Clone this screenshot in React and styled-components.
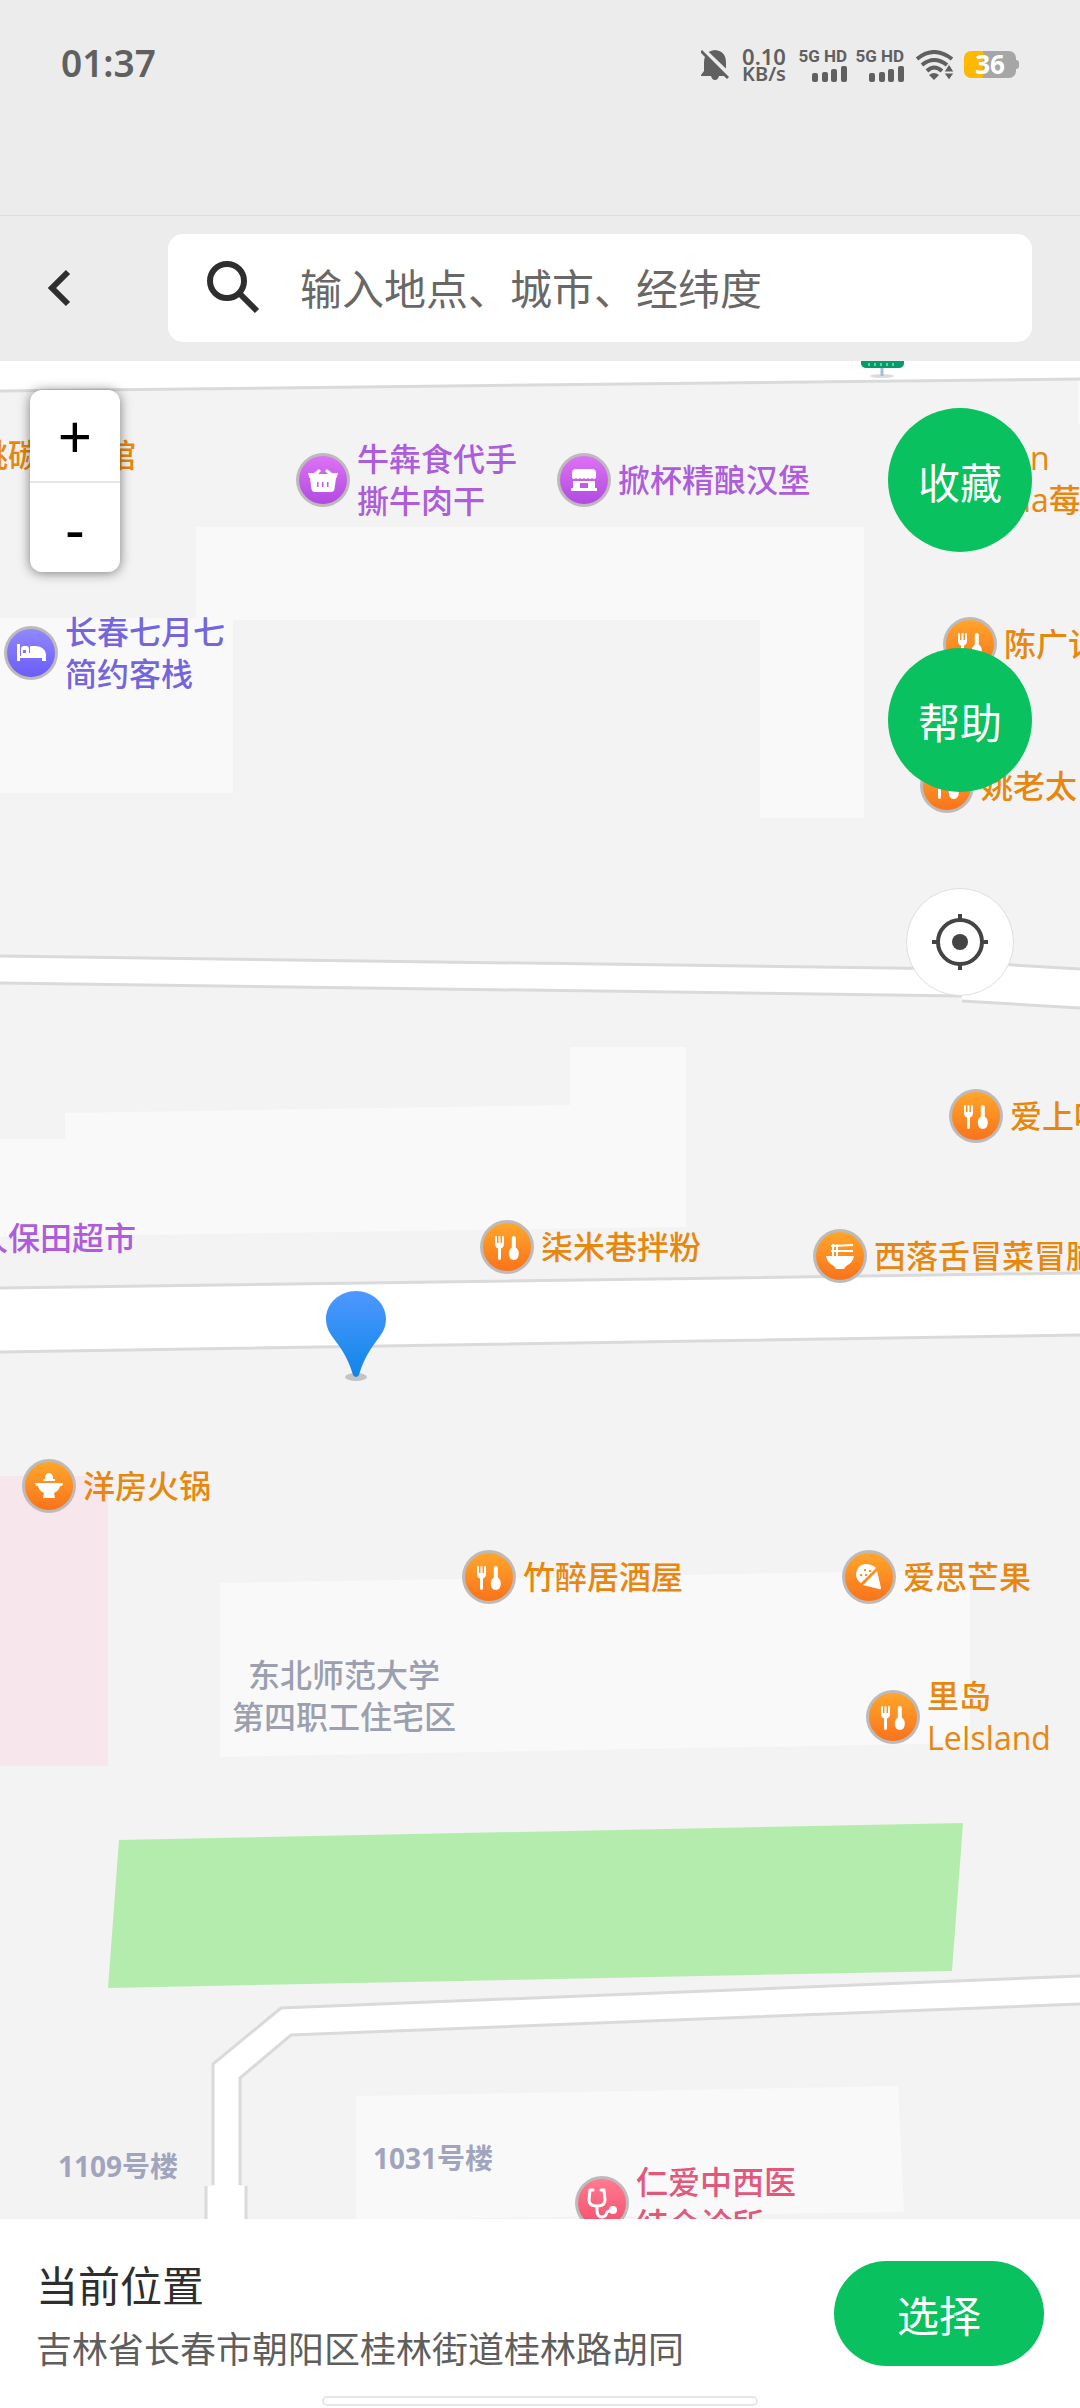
import styled, { createGlobalStyle } from "styled-components";

const GlobalStyle = createGlobalStyle`
  * {
    box-sizing: border-box;
  }
  body {
    margin: 0;
    background-color: #ffffff;
    font-family: "Noto Sans", "Noto Sans CJK SC", sans-serif;
  }
  button, input {
    font-family: inherit;
  }
`;

const Page = styled.div`
  min-height: 100vh;
  display: flex;
  flex-direction: column;
`;

const StatusBar = styled.div`
  height: 215px;
  padding: 39px 61px 0 61px;
  background-color: #ececec;
  color: #606060;
  display: flex;
  justify-content: space-between;
  align-items: flex-start;
`;

const Clock = styled.div`
  font-size: 37px;
  line-height: 48px;
  font-weight: 600;
`;

const StatusIcons = styled.div`
  height: 51px;
  display: flex;
  align-items: center;
`;

const Speed = styled.div`
  width: 46px;
  margin-left: 12px;
  font-size: 22px;
  line-height: 18px;
  font-weight: 600;
  text-align: center;
`;

const SpeedUnit = styled.div`
  font-size: 20px;
`;

const Sim = styled.div`
  width: 47px;
  margin-left: ${(props) => props.$gap}px;
  display: flex;
  flex-direction: column;
  align-items: flex-end;
  gap: 2px;
  font-family: Roboto, sans-serif;
  font-size: 17px;
  line-height: 16px;
  font-weight: 700;
  white-space: nowrap;
`;

const Wifi = styled.svg`
  margin-left: 12px;
`;

const Battery = styled.div`
  width: 52px;
  height: 27px;
  margin-left: 10px;
  border-radius: 7px;
  background: linear-gradient(to right, #fdb900 36%, #a6a6a6 36%);
  color: white;
  font-size: 26px;
  line-height: 27px;
  font-weight: 700;
  text-align: center;
`;

const BatteryTip = styled.div`
  width: 3px;
  height: 9px;
  background-color: #a6a6a6;
  border-radius: 0 3px 3px 0;
`;

const Toolbar = styled.div`
  padding: 18px 48px 19px 0;
  background-color: #ececec;
  border-top: 1px solid #dcdcdc;
  display: flex;
  align-items: center;
`;

const BackButton = styled.button`
  width: 168px;
  height: 108px;
  padding: 0 0 0 44px;
  border: none;
  background: none;
  display: flex;
  align-items: center;
  cursor: pointer;
`;

const SearchBox = styled.label`
  flex: 1;
  height: 108px;
  padding: 0 36px;
  border-radius: 15px;
  background-color: white;
  display: flex;
  align-items: center;
  gap: 36px;
`;

const SearchInput = styled.input`
  flex: 1;
  min-width: 0;
  height: 64px;
  padding: 0;
  border: none;
  outline: none;
  background: none;
  font-size: 42px;
  color: #333333;
  &::placeholder {
    color: #686868;
    opacity: 1;
  }
`;

const Map = styled.main`
  flex: 1;
  min-height: 600px;
  position: relative;
  overflow: hidden;
  background-color: #f3f3f3;
`;

const Tiles = styled.div`
  width: 1080px;
  position: absolute;
  top: 0;
  left: 50%;
  margin-left: -540px;
`;

const Streets = styled.svg`
  display: block;
`;

const Place = styled.div`
  position: absolute;
  left: ${(props) => props.$x}px;
  top: ${(props) => props.$y}px;
  transform: translateY(-50%);
  display: flex;
  align-items: center;
  gap: 7px;
  color: ${(props) => props.$color};
  font-family: "Open Sans", "Noto Sans CJK SC", sans-serif;
  font-size: 32px;
  line-height: 42px;
  font-weight: 500;
  text-align: ${(props) => props.$align || "left"};
  white-space: pre;
`;

const Building = styled(Place)`
  font-size: 28px;
  font-weight: 700;
`;

const Pin = styled.svg`
  position: absolute;
  left: 324px;
  top: 929px;
`;

const ZoomControl = styled.div`
  position: absolute;
  left: 30px;
  top: 29px;
  width: 90px;
  border-radius: 12px;
  background-color: white;
  box-shadow: 0 1px 12px rgba(0, 0, 0, 0.5);
`;

const ZoomButton = styled.button`
  display: block;
  width: 90px;
  height: 91px;
  padding: 0;
  border: none;
  background: none;
  color: black;
  font-size: 60px;
  line-height: 80px;
  cursor: pointer;
  & + & {
    border-top: 2px solid #e6e6e6;
  }
`;

const Actions = styled.div`
  position: absolute;
  right: 48px;
  top: 47px;
  display: flex;
  flex-direction: column;
  align-items: center;
  gap: 96px;
`;

const RoundButton = styled.button`
  width: 144px;
  height: 144px;
  padding: 0;
  border: none;
  border-radius: 50%;
  background-color: #0ac160;
  color: white;
  font-size: 42px;
  cursor: pointer;
`;

const LocateButton = styled.button`
  width: 108px;
  height: 108px;
  padding: 0;
  border: 1px solid #dedede;
  border-radius: 50%;
  background-color: white;
  display: flex;
  align-items: center;
  justify-content: center;
  cursor: pointer;
`;

const Footer = styled.footer`
  background-color: white;
`;

const Current = styled.div`
  height: 177px;
  padding: 12px 36px 0 36px;
  display: flex;
  align-items: center;
  justify-content: space-between;
`;

const CurrentText = styled.div`
  padding-top: 8px;
`;

const Title = styled.h1`
  margin: 0;
  color: #2e2e2e;
  font-size: 42px;
  line-height: 64px;
  font-weight: 400;
`;

const Address = styled.p`
  margin: 0;
  color: #5e5e5e;
  font-size: 36px;
  line-height: 64px;
`;

const SelectButton = styled.button`
  width: 210px;
  height: 105px;
  padding: 0;
  border: none;
  border-radius: 53px;
  background-color: #0ac160;
  color: white;
  font-size: 42px;
  cursor: pointer;
`;

const HomeBar = styled.div`
  width: 436px;
  height: 10px;
  margin: 0 auto 2px;
  border: 2px solid #e6e6e6;
  border-radius: 5px;
`;

const orange = "#e8870e";
const purple = "#ad5cdb";
const violet = "#7465dc";
const grey = "#9b9fae";
const slate = "#a0a4bd";
const red = "#e2587b";

const gradients = {
  food: ["#ffa62b", "#f9731b"],
  shop: ["#dd72f5", "#b14be0"],
  hotel: ["#9088ff", "#6b5cf5"],
  health: ["#ff7a90", "#f4506f"],
};

// glyphs are drawn around the middle of the badge
const glyphs = {
  fork: (
    <>
      <path d="M-12-10q0-1 1-1t1 1v6h1.500v-6q0-1 1-1t1 1v6H-5v-6q0-1 1-1t1 1v7q0 3-3 4.500V11q0 2-1.500 2T-9 11V1.500q-3-1.500-3-4.500z" />
      <path d="M4.800-9q0-2 2-2t2 2v9.500q3 2 3 6 0 6-5 6.500-5-.5-5-6.500 0-4 3-6z" />
    </>
  ),
  basket: (
    <>
      <path d="M-15-7h6l5-4 2 2-3 3H5L2-9l2-2 5 4h6l-1.500 5H-13.500z" />
      <path fillRule="evenodd" d="M-13-2h26l-1.500 11q-.5 3-3.500 3H-8q-3 0-3.500-3zM-6 2v5h1.500V2zM-1 2v5h1.500V2zM4 2v5h1.500V2z" />
    </>
  ),
  store: (
    <>
      <path d="M-12-7q0-4 4-4H8q4 0 4 4v5q-2 2-4 0-2 2-4 0-2 2-4 0-2 2-4 0-2 2-4 0-2 2-4 0z" />
      <path fillRule="evenodd" d="M-11 1h22v7h2v3h-26V8h2zM-4 3v5h8V3z" />
    </>
  ),
  bed: (
    <path fillRule="evenodd" d="M-14-9h3v12h1v-7q0-3 3-3h2q3 0 3 3v4h1v-7h5q9 0 11 8v7H11V5h-22v3h-3zM-8-3v3h3v-3z" />
  ),
  noodles: (
    <>
      <path d="M-8-12h2V0h-2zM-4-12h2V0h-2z" />
      <path d="M-9-11 13-12v2L-9-9zM-9-6H13v2H-9z" />
      <path d="M-14 0h28q-1 7-8 10l-2 3h-8l-2-3Q-13 7-14 0z" />
    </>
  ),
  hotpot: (
    <>
      <path d="M-4-7v-2q1-4 4-4t4 4v2h2v2H-6v-2z" />
      <path d="M-14-3h28l-1 3H11Q10 5 5 7l1 5H-6l1-5q-5-2-6-7h-2z" />
    </>
  ),
  icecream: (
    <>
      <path fillRule="evenodd" d="M-8 6q-5-3-5-9 1-9 9-10 7 0 11 4zM-9-3v2h2v-2zM-5-8v2h2v-2zM-4-3v2h2v-2zM0-7v2h2v-2z" />
      <path d="M8-6l4 17q0 2-2 1L-6 8z" />
    </>
  ),
  doctor: (
    <>
      <path
        d="M-9-13h-3l-1 10q0 6 8 6t8-6l-1-10h-3M-5 3v4q0 7 5 7 4 0 5-5l4-2"
        fill="none"
        stroke="white"
        strokeWidth="3"
        strokeLinecap="round"
        strokeLinejoin="round"
      />
      <circle cx="11" cy="7" r="4" />
    </>
  ),
};

const places = [
  { x: 296, y: 119, color: purple, kind: "shop", icon: "basket", name: "牛犇食代手\n撕牛肉干" },
  { x: 557, y: 119, color: purple, kind: "shop", icon: "store", name: "掀杯精酿汉堡" },
  { x: 4, y: 292, color: violet, kind: "hotel", icon: "bed", name: "长春七月七\n简约客栈" },
  { x: 943, y: 283, color: orange, kind: "food", icon: "fork", name: "陈广记" },
  { x: 920, y: 425, color: orange, kind: "food", icon: "fork", name: "姚老太" },
  { x: 949, y: 755, color: orange, kind: "food", icon: "fork", name: "爱上呷" },
  { x: 480, y: 886, color: orange, kind: "food", icon: "fork", name: "柒米巷拌粉" },
  { x: 813, y: 895, color: orange, kind: "food", icon: "noodles", name: "西落舌冒菜冒脑花" },
  { x: 22, y: 1125, color: orange, kind: "food", icon: "hotpot", name: "洋房火锅" },
  { x: 462, y: 1216, color: orange, kind: "food", icon: "fork", name: "竹醉居酒屋" },
  { x: 842, y: 1216, color: orange, kind: "food", icon: "icecream", name: "爱思芒果" },
  { x: 866, y: 1356, color: orange, kind: "food", icon: "fork", name: "里岛\nLeIsland" },
  { x: 575, y: 1842, color: red, kind: "health", icon: "doctor", name: "仁爱中西医\n结合诊所" },
  { x: -24, y: 94, color: orange, name: "桃碳烤肉馆" },
  { x: -24, y: 877, color: purple, name: "久保田超市" },
  { x: 1030, y: 97, color: orange, name: "n" },
  { x: 1023, y: 139, color: orange, name: "la莓" },
  { x: 232, y: 1335, color: grey, align: "center", name: "东北师范大学\n第四职工住宅区" },
];

const Badge = ({ kind, icon }) => (
  <svg width="54" height="54" viewBox="-27 -27 54 54">
    <defs>
      <linearGradient id={kind} x1="0" y1="0" x2="0" y2="1">
        <stop offset="0" stopColor={gradients[kind][0]} />
        <stop offset="1" stopColor={gradients[kind][1]} />
      </linearGradient>
    </defs>
    <circle r="27" fill="#bdbabb" />
    <circle r="24" fill={`url(#${kind})`} />
    <g fill="white">{glyphs[icon]}</g>
  </svg>
);

const SignalBars = () => (
  <svg width="35" height="16" viewBox="0 0 35 16" fill="#606060">
    <rect x="0" y="7" width="6" height="9" rx="2" />
    <rect x="10" y="6" width="6" height="10" rx="2" />
    <rect x="19" y="3" width="6" height="13" rx="2" />
    <rect x="29" y="0" width="6" height="16" rx="2" />
  </svg>
);

const StreetMap = () => (
  <Streets width="1080" height="1858" viewBox="0 0 1080 1858">
    <g fill="#f9f9f9">
      <path d="M196 166H864V457H760V259H196z" />
      <path d="M0 257H233V432H0z" />
      <path d="M0 778H65V752L570 744V686H686V866L0 876z" />
      <path d="M220 1222L970 1209V1382L220 1396z" />
      <path d="M356 1735L898 1725L904 1851L356 1859z" />
      <path d="M1078 20H1080V63H1078z" />
    </g>
    <path d="M0 1115H108V1405H0z" fill="#f7e6ec" />
    <path d="M119 1479L963 1462L952 1610L108 1627z" fill="#b4ecae" />
    <g fill="white">
      <path d="M0 0H1080V18L0 30z" />
      <path d="M0 595L962 608V601L1080 608V647L962 640V635L0 622z" />
      <path d="M0 927L1080 912V974L0 991z" />
      <path d="M1080 1615L281 1647L213 1703V1825H206V1858H246V1825H240V1717L291 1674L1080 1643z" />
    </g>
    <g fill="none" stroke="#dadada" strokeWidth="3">
      <path d="M0 30L1080 18" />
      <path d="M0 595L962 608M962 601L1080 608M0 622L962 635M962 640L1080 647" />
      <path d="M0 927L1080 912M0 991L1080 974" />
      <path d="M1080 1615L281 1647L213 1703V1824M1080 1643L291 1674L240 1717V1824M206 1825V1858M246 1825V1858" />
    </g>
    <ellipse cx="882" cy="15" rx="12" ry="2" fill="#d9dde0" />
    <path d="M882 7V15" stroke="#a9bccb" strokeWidth="3" />
    <path d="M861 0H904V3Q903 7 899 7H866Q862 7 861 3z" fill="#079b6b" />
    <path d="M869 2V5M875 2V5M881 2V5M887 2V5M893 2V5" stroke="#5fd0aa" strokeWidth="2" />
  </Streets>
);

const App = () => {
  return (
    <Page>
      <GlobalStyle />
      <StatusBar>
        <Clock>01:37</Clock>
        <StatusIcons>
          <svg width="28" height="32" viewBox="0 0 28 32">
            <path
              d="M14 1q11 1 11 13v8l3 4v1H18q-1 4-4 4t-4-4H0v-1l3-4v-8Q3 2 14 1z"
              fill="#606060"
            />
            <path d="M1 0L29 27" stroke="#ececec" strokeWidth="5" />
            <path d="M0 2L27 29" stroke="#606060" strokeWidth="3" />
          </svg>
          <Speed>
            0.10
            <SpeedUnit>KB/s</SpeedUnit>
          </Speed>
          <Sim $gap={13}>
            5G HD
            <SignalBars />
          </Sim>
          <Sim $gap={10}>
            5G HD
            <SignalBars />
          </Sim>
          <Wifi width="38" height="30" viewBox="0 0 38 30">
            <g fill="none" stroke="#606060" strokeWidth="4">
              <path d="M1 9Q18-5 36 9" />
              <path d="M6 15Q18 5 31 15" />
              <path d="M11 21Q18 14 26 21" />
            </g>
            <path d="M13 25Q18 21 23 25L18 30z" fill="#606060" />
            <path d="M33 14L38 22H28zM33 30L38 23H28z" fill="#606060" stroke="#ececec" />
          </Wifi>
          <Battery>36</Battery>
          <BatteryTip />
        </StatusIcons>
      </StatusBar>

      <Toolbar>
        <BackButton aria-label="返回">
          <svg width="30" height="40" viewBox="0 0 30 40">
            <path d="M24 4L8 20L24 36" fill="none" stroke="#2e2e2e" strokeWidth="6" />
          </svg>
        </BackButton>
        <SearchBox>
          <svg width="60" height="60" viewBox="0 0 60 60" fill="none" stroke="#2e2e2e">
            <circle cx="23" cy="23" r="17" strokeWidth="6" />
            <path d="M36 36L53 53" strokeWidth="6" />
          </svg>
          <SearchInput aria-label="搜索" placeholder="输入地点、城市、经纬度" />
        </SearchBox>
      </Toolbar>

      <Map>
        <Tiles>
          <StreetMap />
          {places.map((place) => (
            <Place
              key={place.name}
              $x={place.x}
              $y={place.y}
              $color={place.color}
              $align={place.align}
            >
              {place.icon && <Badge kind={place.kind} icon={place.icon} />}
              <span>{place.name}</span>
            </Place>
          ))}
          <Building $x={58} $y={1805} $color={slate}>
            1109号楼
          </Building>
          <Building $x={373} $y={1797} $color={slate}>
            1031号楼
          </Building>
          <Pin width="64" height="92" viewBox="0 0 64 92">
            <defs>
              <linearGradient id="pin" x1="0" y1="0" x2="0" y2="1">
                <stop offset="0" stopColor="#4f98ff" />
                <stop offset="1" stopColor="#0f86e8" />
              </linearGradient>
            </defs>
            <ellipse cx="32" cy="87" rx="11" ry="4" fill="#c4c4c4" />
            <path
              d="M32 1C48 1 62 13 62 29C62 39 57 45 51 53C43 64 38 74 35 85Q32 89 29 85C26 74 21 64 13 53C7 45 2 39 2 29C2 13 16 1 32 1z"
              fill="url(#pin)"
            />
          </Pin>
        </Tiles>

        <ZoomControl>
          <ZoomButton aria-label="放大">+</ZoomButton>
          <ZoomButton aria-label="缩小">-</ZoomButton>
        </ZoomControl>

        <Actions>
          <RoundButton>收藏</RoundButton>
          <RoundButton>帮助</RoundButton>
          <LocateButton aria-label="定位">
            <svg width="56" height="56" viewBox="0 0 56 56" fill="none" stroke="#444444">
              <circle cx="28" cy="28" r="22" strokeWidth="4" />
              <circle cx="28" cy="28" r="8" fill="#444444" stroke="none" />
              <path d="M28 0V6M28 50V56M0 28H6M50 28H56" strokeWidth="4" />
            </svg>
          </LocateButton>
        </Actions>
      </Map>

      <Footer>
        <Current>
          <CurrentText>
            <Title>当前位置</Title>
            <Address>吉林省长春市朝阳区桂林街道桂林路胡同</Address>
          </CurrentText>
          <SelectButton>选择</SelectButton>
        </Current>
        <HomeBar />
      </Footer>
    </Page>
  );
};

export default App;
